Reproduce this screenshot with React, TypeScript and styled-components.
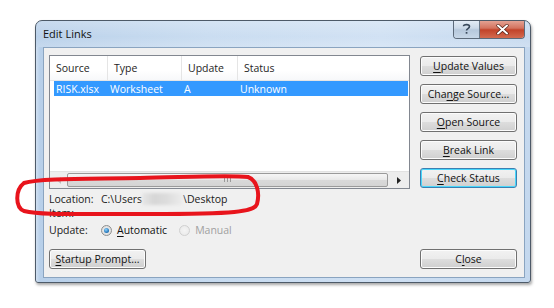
import React from "react";
import styled, { createGlobalStyle, css } from "styled-components";

const Global = createGlobalStyle`
  html, body { margin: 0; padding: 0; background: #ffffff; }
  body { width: 554px; height: 308px; overflow: hidden; font-family: "Open Sans", "Noto Sans", sans-serif; font-size: 10.5px; color: #1a1a1a; }
`;

const Page = styled.div`
  position: relative;
  width: 554px;
  height: 308px;
  padding: 20px 0 0 35px;
  box-sizing: border-box;
`;

const Window = styled.div`
  width: 496px;
  height: 263px;
  box-sizing: border-box;
  border: 1px solid #4d5a68;
  border-radius: 7px 7px 3px 3px;
  background: linear-gradient(90deg, #b7cfe9 0%, #c7dbf0 35%, #cfe0f3 70%, #c4d8ee 100%);
  box-shadow: 1px 2px 3px rgba(0, 0, 0, 0.35);
  display: flex;
  flex-direction: column;
  overflow: hidden;
`;

const TitleBar = styled.div`
  height: 26px;
  flex: none;
  display: flex;
  justify-content: space-between;
  align-items: flex-start;
  background: linear-gradient(180deg, rgba(255,255,255,0.25) 0%, rgba(255,255,255,0.05) 60%, rgba(255,255,255,0.2) 100%);
`;

const Title = styled.div`
  padding: 6px 0 0 7px;
  font-size: 11px;
  line-height: 14px;
  color: #111;
`;

const CaptionButtons = styled.div`
  display: flex;
  margin-right: 5px;
  margin-top: -1px;
  height: 18px;
  border: 1px solid #5c6a7a;
  border-top: none;
  border-radius: 0 0 4px 4px;
  overflow: hidden;
`;

const CaptionButton = styled.div<{ $close?: boolean }>`
  display: flex;
  align-items: center;
  justify-content: center;
  width: ${(p) => (p.$close ? "44px" : "25px")};
  height: 18px;
  ${(p) =>
    p.$close
      ? css`
          background: linear-gradient(180deg, #e6a89a 0%, #d4735f 45%, #c2432a 55%, #d36a4f 100%);
        `
      : css`
          background: linear-gradient(180deg, #e6eef7 0%, #cbd9e8 45%, #b6c8dc 55%, #c7d7e8 100%);
          border-right: 1px solid #6a7888;
        `}
`;

const Frame = styled.div`
  flex: 1;
  display: flex;
  padding: 0 5px 4px 7px;
  background: linear-gradient(90deg, rgba(255,255,255,0.35) 0px, rgba(255,255,255,0) 4px);
`;

const Client = styled.div`
  flex: 1;
  box-sizing: border-box;
  border: 1px solid #8aa4c0;
  background: #f0f0f0;
  padding: 7px 7px 8px 5px;
  display: flex;
  flex-direction: column;
`;

const TopRow = styled.div`
  display: flex;
  gap: 10px;
`;

const ListBox = styled.div`
  width: 361px;
  height: 134px;
  box-sizing: border-box;
  border: 1px solid #828790;
  background: #fff;
  display: flex;
  flex-direction: column;
`;

const cols = "58px 74px 56px 1fr";

const Header = styled.div`
  height: 24px;
  flex: none;
  display: grid;
  grid-template-columns: ${cols};
  border-bottom: 1px solid #e5e5e5;
  background: linear-gradient(180deg, #ffffff 0%, #ffffff 60%, #f7f8fa 100%);
`;

const HeaderCell = styled.div<{ $first?: boolean }>`
  display: flex;
  align-items: center;
  padding-left: ${(p) => (p.$first ? "6px" : "6px")};
  border-right: 1px solid #e5e5e5;
  color: #1e1e1e;
`;

const Rows = styled.div`
  flex: 1;
  padding: 0 0 0 4px;
`;

const Row = styled.div<{ $selected?: boolean }>`
  display: grid;
  grid-template-columns: 54px 74px 56px 1fr;
  height: 15px;
  align-items: center;
  margin-right: 1px;
  background: ${(p) => (p.$selected ? "#3399ff" : "transparent")};
  color: ${(p) => (p.$selected ? "#fff" : "#000")};
`;

const Cell = styled.div`
  padding-left: 2px;
  white-space: nowrap;
`;

const HScroll = styled.div`
  height: 16px;
  flex: none;
  display: grid;
  grid-template-columns: 17px 1fr 21px;
  background: #ededed;
  border-top: 1px solid #e2e2e2;
`;

const ScrollArrow = styled.div<{ $disabled?: boolean }>`
  display: flex;
  align-items: center;
  justify-content: center;
  color: ${(p) => (p.$disabled ? "#c0c0c0" : "#222")};
`;

const Thumb = styled.div`
  margin: 1px 0;
  border: 1px solid #9a9a9a;
  border-radius: 2px;
  background: linear-gradient(180deg, #f6f6f6 0%, #e8e8e8 50%, #d9d9d9 51%, #d4d4d4 100%);
  display: flex;
  align-items: center;
  justify-content: center;
`;

const Grip = styled.div`
  width: 8px;
  height: 4px;
  background-image: repeating-linear-gradient(90deg, #9a9a9a 0 1px, transparent 1px 3px);
`;

const ButtonCol = styled.div`
  display: flex;
  flex-direction: column;
  gap: 8px;
  padding-top: 1px;
`;

const Button = styled.div<{ $focused?: boolean; $w?: number }>`
  width: ${(p) => p.$w ?? 97}px;
  height: 20px;
  box-sizing: border-box;
  border: 1px solid ${(p) => (p.$focused ? "#3c7fb1" : "#707070")};
  border-radius: 3px;
  display: flex;
  align-items: center;
  justify-content: center;
  color: #111;
  background: linear-gradient(180deg, #f2f2f2 0%, #ebebeb 48%, #dddddd 52%, #cfcfcf 100%);
  box-shadow: inset 0 0 0 1px ${(p) => (p.$focused ? "#48d7fb" : "#fcfcfc")};
  ${(p) => p.$focused && css`background: linear-gradient(180deg, #eaf6fd 0%, #d9f0fc 48%, #bee6fd 52%, #a7d9f5 100%); background: linear-gradient(180deg, #f2f2f2 0%, #ebebeb 48%, #dddddd 52%, #cfcfcf 100%);`}
`;

const U = styled.span`
  text-decoration: underline;
  text-underline-offset: 2px;
`;

const InfoRow = styled.div<{ $h: number; $mt?: number }>`
  display: flex;
  align-items: center;
  height: ${(p) => p.$h}px;
  margin-top: ${(p) => p.$mt ?? 0}px;
`;

const Label = styled.div`
  width: 52px;
  flex: none;
`;

const Blur = styled.span`
  display: inline-block;
  width: 41px;
  height: 12px;
  vertical-align: middle;
  background: linear-gradient(90deg, #e6e6e6 0%, #d6d6d6 30%, #dcdcdc 60%, #ececec 100%);
  filter: blur(1.5px);
`;

const RadioGroup = styled.label<{ $disabled?: boolean }>`
  display: flex;
  align-items: center;
  gap: 5px;
  margin-right: 12px;
  color: ${(p) => (p.$disabled ? "#a0a0a0" : "#111")};
`;

const RadioCircle = styled.span<{ $checked?: boolean; $disabled?: boolean }>`
  width: 11px;
  height: 11px;
  box-sizing: border-box;
  border-radius: 50%;
  border: 1px solid ${(p) => (p.$disabled ? "#d0d0d0" : "#8e8f8f")};
  background: ${(p) =>
    p.$disabled
      ? "radial-gradient(circle, #f4f4f4 0%, #e8e8e8 100%)"
      : "radial-gradient(circle at 50% 50%, #f4f4f4 0%, #d6d6d6 100%)"};
  display: flex;
  align-items: center;
  justify-content: center;
  &::after {
    content: "";
    display: ${(p) => (p.$checked ? "block" : "none")};
    width: 5px;
    height: 5px;
    border-radius: 50%;
    background: radial-gradient(circle at 40% 35%, #8ad3ff 0%, #1f6fb2 70%, #124e85 100%);
  }
`;

const BottomRow = styled.div`
  display: flex;
  justify-content: space-between;
  margin-top: 11px;
`;

const Annotation = styled.svg`
  position: absolute;
  left: 0;
  top: 0;
  pointer-events: none;
`;

export default function App() {
  return (
    <>
      <Global />
      <Page>
        <Window>
          <TitleBar>
            <Title>Edit Links</Title>
            <CaptionButtons>
              <CaptionButton>
                <svg width="9" height="12" viewBox="0 0 9 12">
                  <path d="M1.5 3.2 C1.5 1 7.5 1 7.5 3.6 C7.5 5.6 4.5 5.6 4.5 7.6" fill="none" stroke="#3a4a5c" strokeWidth="1.6" />
                  <rect x="3.7" y="9" width="1.7" height="1.7" fill="#3a4a5c" />
                </svg>
              </CaptionButton>
              <CaptionButton $close>
                <svg width="13" height="11" viewBox="0 0 13 11">
                  <path d="M2 1.5 L11 9.5 M11 1.5 L2 9.5" stroke="#4a1a10" strokeWidth="3.2" strokeLinecap="round" />
                  <path d="M2 1.5 L11 9.5 M11 1.5 L2 9.5" stroke="#ffffff" strokeWidth="2" strokeLinecap="round" />
                </svg>
              </CaptionButton>
            </CaptionButtons>
          </TitleBar>
          <Frame>
            <Client>
              <TopRow>
                <ListBox>
                  <Header>
                    <HeaderCell $first>Source</HeaderCell>
                    <HeaderCell>Type</HeaderCell>
                    <HeaderCell>Update</HeaderCell>
                    <HeaderCell style={{ borderRight: "none" }}>Status</HeaderCell>
                  </Header>
                  <Rows>
                    <Row $selected>
                      <Cell>RISK.xlsx</Cell>
                      <Cell>Worksheet</Cell>
                      <Cell>A</Cell>
                      <Cell>Unknown</Cell>
                    </Row>
                  </Rows>
                  <HScroll>
                    <ScrollArrow $disabled>
                      <svg width="4" height="7" viewBox="0 0 4 7"><path d="M4 0 L0 3.5 L4 7 Z" fill="currentColor" /></svg>
                    </ScrollArrow>
                    <Thumb>
                      <Grip />
                    </Thumb>
                    <ScrollArrow>
                      <svg width="4" height="7" viewBox="0 0 4 7"><path d="M0 0 L4 3.5 L0 7 Z" fill="currentColor" /></svg>
                    </ScrollArrow>
                  </HScroll>
                </ListBox>
                <ButtonCol>
                  <Button><span><U>U</U>pdate Values</span></Button>
                  <Button><span>Cha<U>n</U>ge Source...</span></Button>
                  <Button><span><U>O</U>pen Source</span></Button>
                  <Button><span><U>B</U>reak Link</span></Button>
                  <Button $focused><span><U>C</U>heck Status</span></Button>
                </ButtonCol>
              </TopRow>
              <InfoRow $h={14} $mt={3}>
                <Label>Location:</Label>
                <span>C:\Users</span>
                <Blur />
                <span>\Desktop</span>
              </InfoRow>
              <InfoRow $h={14}>
                <Label>Item:</Label>
              </InfoRow>
              <InfoRow $h={16} $mt={2}>
                <Label>Update:</Label>
                <RadioGroup>
                  <RadioCircle $checked />
                  <span><U>A</U>utomatic</span>
                </RadioGroup>
                <RadioGroup $disabled>
                  <RadioCircle $disabled />
                  <span>Manual</span>
                </RadioGroup>
              </InfoRow>
              <BottomRow>
                <Button><span><U>S</U>tartup Prompt...</span></Button>
                <Button><span>C<U>l</U>ose</span></Button>
              </BottomRow>
            </Client>
          </Frame>
        </Window>
        <Annotation width="554" height="308" viewBox="0 0 554 308">
          <path
            d="M24 183 C40 178 90 179 140 178 S230 175 248 177 C257 180 260 193 257 204 C254 212 235 214 150 214 S40 215 24 211 C15 207 15 190 24 183"
            fill="none"
            stroke="#e8141c"
            strokeWidth="4"
            strokeLinecap="round"
          />
        </Annotation>
      </Page>
    </>
  );
}
